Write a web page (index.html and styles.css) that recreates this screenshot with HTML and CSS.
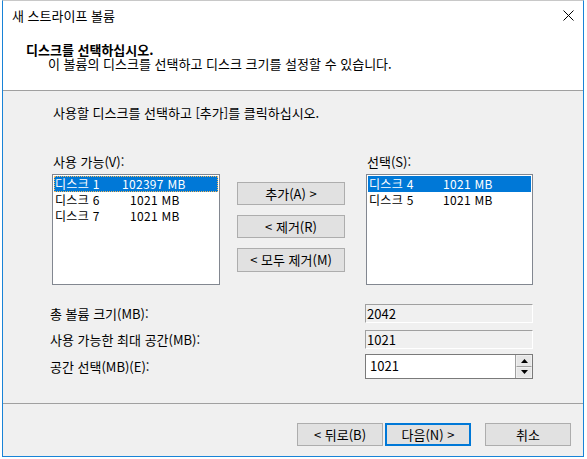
FILE: index.html
```html
<!DOCTYPE html>
<html lang="ko">
<head>
<meta charset="utf-8">
<title>새 스트라이프 볼륨</title>
<link rel="stylesheet" href="styles.css">
</head>
<body>
<div class="window">
  <div class="top">
    <div class="titlebar">
      <span class="title">새 스트라이프 볼륨</span>
      <svg class="close" width="11" height="11" viewBox="0 0 11 11"><path d="M0.5 0.5 L10.5 10.5 M10.5 0.5 L0.5 10.5" stroke="#000" stroke-width="1" fill="none"/></svg>
    </div>
    <div class="hdr">디스크를 선택하십시오.
이 볼륨의 디스크를 선택하고 디스크 크기를 설정할 수 있습니다.</div>
  </div>
  <div class="main">
    <div class="instr">사용할 디스크를 선택하고 [추가]를 클릭하십시오.</div>
    <div class="lists">
      <div class="col col-left">
        <div class="lbl">사용 가능(V):</div>
        <div class="listbox">
          <div class="item sel focus"><span class="nm">디스크 1</span><span class="sz">102397 MB</span></div>
          <div class="item"><span class="nm">디스크 6</span><span class="sz pad">1021 MB</span></div>
          <div class="item"><span class="nm">디스크 7</span><span class="sz pad">1021 MB</span></div>
        </div>
      </div>
      <div class="btns">
        <div class="btn mid">추가(A) &gt;</div>
        <div class="btn mid">&lt; 제거(R)</div>
        <div class="btn mid tall">&lt; 모두 제거(M)</div>
      </div>
      <div class="col col-right">
        <div class="lbl">선택(S):</div>
        <div class="listbox narrow">
          <div class="item sel"><span class="nm">디스크 4</span><span class="sz pad">1021 MB</span></div>
          <div class="item"><span class="nm">디스크 5</span><span class="sz pad">1021 MB</span></div>
        </div>
      </div>
    </div>
    <div class="fields">
      <div class="frow r1">
        <div class="flbl">총 볼륨 크기(MB):</div>
        <div class="ro">2042</div>
      </div>
      <div class="frow r2">
        <div class="flbl">사용 가능한 최대 공간(MB):</div>
        <div class="ro">1021</div>
      </div>
      <div class="frow r3">
        <div class="flbl">공간 선택(MB)(E):</div>
        <div class="spin">
          <div class="spin-val">1021</div>
          <div class="spin-btns">
            <div class="sb up"><svg width="7" height="4" viewBox="0 0 7 4"><path d="M3.5 0 L7 4 L0 4 Z" fill="#000"/></svg></div>
            <div class="sb down"><svg width="7" height="4" viewBox="0 0 7 4"><path d="M0 0 L7 0 L3.5 4 Z" fill="#000"/></svg></div>
          </div>
        </div>
      </div>
    </div>
  </div>
  <div class="footer">
    <div class="btn fb">&lt; 뒤로(B)</div>
    <div class="btn fb default">다음(N) &gt;</div>
    <div class="btn fb cancel">취소</div>
  </div>
</div>
</body>
</html>
```
FILE: styles.css
```css
* { box-sizing: border-box; }
html, body {
  margin: 0;
  padding: 0;
  background: #ffffff;
  width: 587px;
  height: 459px;
  overflow: hidden;
}
body {
  font-family: "Noto Sans CJK KR", "Noto Sans", sans-serif;
  font-size: 13px;
  color: #000;
}
.window {
  margin-left: 2px;
  width: 582px;
  height: 457px;
  border: 1px solid #1883d7;
  border-top-color: #c8c8c8;
  display: flex;
  flex-direction: column;
  background: #f0f0f0;
}
.top {
  height: 90px;
  background: #ffffff;
  border-bottom: 1px solid #a0a0a0;
  flex: none;
}
.titlebar {
  height: 30px;
  display: flex;
  align-items: center;
  justify-content: space-between;
  padding-left: 9px;
  padding-right: 9px;
}
.title { line-height: 16px; }
.close { display: block; margin-top: -1px; }
.hdr {
  margin-top: 12px;
  padding-left: 45px;
  text-indent: -22px;
  line-height: 14px;
  white-space: pre-line;
}
.hdr::first-line { font-weight: bold; }
.main {
  height: 313px;
  flex: none;
  border-bottom: 1px solid #a0a0a0;
  padding-left: 49px;
  padding-top: 14px;
}
.instr { line-height: 16px; padding-left: 1px; }
.lists {
  display: flex;
  margin-top: 33px;
}
.lbl { line-height: 16px; height: 16px; margin-bottom: 4px; padding-left: 1px; }
.col-left { width: 168px; }
.col-right { width: 167px; }
.listbox {
  height: 111px;
  background: #ffffff;
  border: 1px solid #828790;
  padding: 1px;
  font-size: 12px;
  letter-spacing: 0.3px;
}
.item {
  height: 16px;
  line-height: 16px;
  padding-left: 1px;
  white-space: nowrap;
  display: flex;
}
.item.sel { background: #0078d7; color: #fff; }
.item.focus { outline: 1px dotted #f5b85a; outline-offset: -1px; }
.nm { width: 67px; flex: none; }
.sz.pad { padding-left: 8px; }
.narrow .nm { width: 66px; }
.btns {
  width: 108px;
  margin-left: 17px;
  margin-right: 21px;
  padding-top: 28px;
  display: flex;
  flex-direction: column;
  gap: 10px;
}
.btn {
  background: #e1e1e1;
  border: 1px solid #adadad;
  display: flex;
  align-items: center;
  justify-content: center;
  line-height: 16px;
  white-space: nowrap;
}
.btn.mid { height: 23px; }
.btn.mid.tall { height: 24px; }
.fields { margin-top: 19px; margin-left: -2px; }
.frow { display: flex; align-items: center; }
.flbl { width: 315px; line-height: 16px; }
.r1 { height: 19px; }
.r2 { height: 19px; margin-top: 7px; }
.r3 { height: 25px; margin-top: 5px; }
.ro {
  width: 168px;
  height: 19px;
  border: 1px solid #a0a0a0;
  border-right-color: #ffffff;
  border-bottom-color: #ffffff;
  padding-left: 1px;
  line-height: 17px;
  background: #f0f0f0;
}
.spin {
  width: 168px;
  height: 25px;
  border: 1px solid #7a7a7a;
  background: #fff;
  display: flex;
}
.spin-val {
  flex: 1;
  padding-left: 4px;
  line-height: 21px;
}
.spin-btns {
  width: 17px;
  display: flex;
  flex-direction: column;
  border-left: 1px solid #a0a0a0;
  background: #f0f0f0;
}
.sb {
  flex: 1;
  display: flex;
  align-items: center;
  justify-content: center;
  background: #e6e6e6;
  border: 1px solid #f0f0f0;
}
.sb.up { border-bottom: 1px solid #a0a0a0; }
.sb svg { display: block; }
.footer {
  flex: 1;
  display: flex;
  justify-content: flex-end;
  align-items: flex-start;
  padding-top: 19px;
  padding-right: 12px;
}
.btn.fb { width: 86px; height: 23px; }
.btn.fb.default { margin-left: 2px; border: 2px solid #0078d7; }
.btn.fb.cancel { margin-left: 14px; }
```
